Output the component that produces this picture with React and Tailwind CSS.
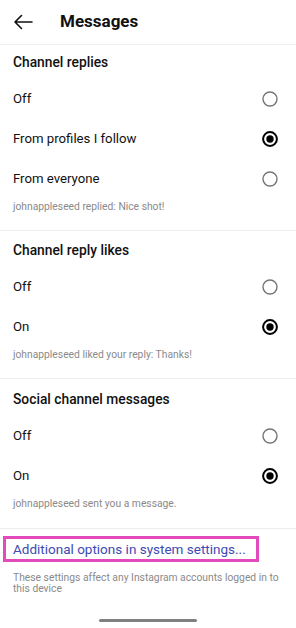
import React from "react";

function Radio({ checked }) {
  return (
    <svg width="16" height="16" viewBox="0 0 16 16">
      {checked ? (
        <>
          <circle cx="8" cy="8" r="6.9" fill="none" stroke="#000" strokeWidth="2" />
          <circle cx="8" cy="8" r="3.7" fill="#000" />
        </>
      ) : (
        <circle cx="8" cy="8" r="7" fill="none" stroke="#757575" strokeWidth="1.4" />
      )}
    </svg>
  );
}

function Option({ label, checked }) {
  return (
    <div className="flex h-[40px] items-center justify-between pl-[13px] pr-[18px]">
      <span className="text-[13.2px] text-[#111]">{label}</span>
      <Radio checked={checked} />
    </div>
  );
}

function Section({ title, options, note, pt, pb }) {
  return (
    <div className={`border-b border-[#ededed] ${pt} ${pb}`}>
      <div className="px-[13px] h-[20px] flex items-center text-[13.8px] font-medium text-[#111]">{title}</div>
      <div className="mt-[7px]">
        {options.map((o) => (
          <Option key={o.label} label={o.label} checked={o.checked} />
        ))}
      </div>
      <div className="mt-[1px] px-[13px] h-[14px] flex items-center text-[10.3px] text-[#8a8a8a] whitespace-nowrap">{note}</div>
    </div>
  );
}

export default function App() {
  return (
    <div className="w-[296px] h-[628px] bg-white flex flex-col relative" style={{ fontFamily: "Roboto, 'Noto Sans', sans-serif" }}>
      <div className="h-[45px] flex items-center border-b border-[#ededed] shrink-0">
        <svg className="ml-[13px]" width="20" height="16" viewBox="0 0 20 16">
          <path d="M19 8H2M8.5 1.5L2 8l6.5 6.5" fill="none" stroke="#111" strokeWidth="1.6" strokeLinecap="round" strokeLinejoin="round" />
        </svg>
        <span className="ml-[27px] text-[17px] font-bold text-[#111]">Messages</span>
      </div>
      <Section
        pt="pt-[7px]"
        pb="pb-[16px]"
        title="Channel replies"
        options={[
          { label: "Off", checked: false },
          { label: "From profiles I follow", checked: true },
          { label: "From everyone", checked: false },
        ]}
        note="johnappleseed replied: Nice shot!"
      />
      <Section
        pt="pt-[9px]"
        pb="pb-[16px]"
        title="Channel reply likes"
        options={[
          { label: "Off", checked: false },
          { label: "On", checked: true },
        ]}
        note="johnappleseed liked your reply: Thanks!"
      />
      <Section
        pt="pt-[10px]"
        pb="pb-[17px]"
        title="Social channel messages"
        options={[
          { label: "Off", checked: false },
          { label: "On", checked: true },
        ]}
        note="johnappleseed sent you a message."
      />
      <div className="mt-[7px] ml-[3px] w-[256px] h-[26px] border-[3px] border-[#e34bbd] flex items-center pl-[7px]">
        <span className="text-[13.5px] text-[#3d4ab4] whitespace-nowrap">Additional options in system settings...</span>
      </div>
      <div className="mt-[11px] pl-[13px] pr-[10px] text-[10.3px] leading-[10.5px] text-[#8a8a8a]">
        These settings affect any Instagram accounts logged in to this device
      </div>
      <div className="absolute left-[99px] top-[619px] w-[98px] h-[3px] rounded-full bg-[#808080]" />
    </div>
  );
}
